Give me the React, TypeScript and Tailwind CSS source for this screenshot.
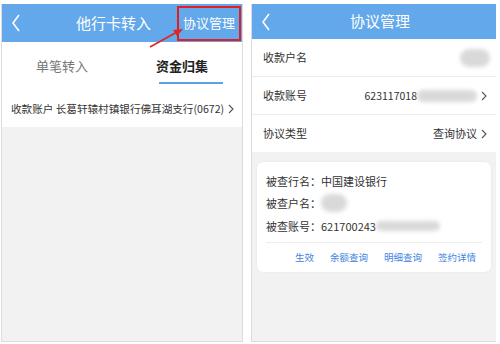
import React from "react"

const font = { fontFamily: '"Noto Sans CJK SC", "Noto Sans", sans-serif' }

function Back() {
  return (
    <svg width="10" height="18" viewBox="0 0 10 18" className="shrink-0">
      <polyline points="8,1 2,9 8,17" fill="none" stroke="white" strokeWidth="1.6" />
    </svg>
  )
}

function Chevron() {
  return (
    <svg width="6" height="10" viewBox="0 0 6 10" className="shrink-0">
      <polyline points="1,1 5,5 1,9" fill="none" stroke="#555" strokeWidth="1.1" />
    </svg>
  )
}

function Blur({ className }: { className: string }) {
  return <span className={"inline-block rounded-full bg-[#d9d9d9] blur-[2px] " + className} />
}

function LeftPanel() {
  return (
    <div className="relative flex w-[242px] flex-col border-x border-b border-[#dcdcdc] bg-[#f2f2f2]">
      <div className="flex h-[38px] items-center bg-[#62a8ea] pl-[9px] pr-[1px] text-white">
        <Back />
        <div className="flex-1 pl-[55px] text-[15px]">他行卡转入</div>
        <div className="flex h-[35px] items-center border-2 border-[#e02020] px-[4px] text-[13px]">协议管理</div>
      </div>
      <svg className="absolute left-[145px] top-[22px]" width="40" height="24" viewBox="0 0 40 24">
        <line x1="3" y1="21" x2="30" y2="6" stroke="#e02525" strokeWidth="1.6" />
        <polygon points="36,3 26,4 30,10" fill="#e02525" />
      </svg>
      <div className="flex h-[48px] bg-white text-[13px]">
        <div className="flex w-1/2 items-center justify-center text-[#777]">单笔转入</div>
        <div className="relative flex w-1/2 items-center justify-center font-bold text-[#222]">
          资金归集
          <span className="absolute bottom-[6px] left-[37px] h-[2px] w-[64px] bg-[#5aa2e6]" />
        </div>
      </div>
      <div className="flex h-[37px] items-center justify-between bg-white pl-[9px] pr-[8px] text-[10.6px] text-[#333]">
        <span>收款账户 长葛轩辕村镇银行佛耳湖支行(0672)</span>
        <Chevron />
      </div>
    </div>
  )
}

function RightPanel() {
  return (
    <div className="flex w-[245px] flex-col border-l border-b border-[#dcdcdc] bg-[#f2f2f2] text-[#333]">
      <div className="flex h-[35px] items-center bg-[#62a8ea] pl-[9px] text-white">
        <Back />
        <div className="flex-1 pl-[79px] text-[15px]">协议管理</div>
      </div>
      <div className="bg-white text-[11px]">
        <div className="flex h-[38px] items-center justify-between border-b border-[#ececec] pl-[11px] pr-[6px]">
          <span>收款户名</span>
          <Blur className="h-[18px] w-[30px]" />
        </div>
        <div className="flex h-[38px] items-center border-b border-[#ececec] pl-[11px] pr-[9px]">
          <span className="flex-1">收款账号</span>
          <span className="text-[10.5px]" style={font}>623117018</span>
          <Blur className="mr-[4px] h-[12px] w-[60px]" />
          <Chevron />
        </div>
        <div className="flex h-[37px] items-center pl-[11px] pr-[9px]">
          <span className="flex-1">协议类型</span>
          <span className="mr-[4px]">查询协议</span>
          <Chevron />
        </div>
      </div>
      <div className="px-[5px] pt-[10px]">
        <div className="rounded-[6px] bg-white px-[9px] pt-[8px] text-[11px] shadow-[0_0_2px_rgba(0,0,0,0.08)]">
          <div className="flex h-[22px] items-center">被查行名：中国建设银行</div>
          <div className="flex h-[22px] items-center">
            被查户名：<Blur className="h-[18px] w-[26px]" />
          </div>
          <div className="flex h-[24px] items-center">
            被查账号：621700243<Blur className="h-[10px] w-[64px]" />
          </div>
          <div className="mt-[4px] flex h-[30px] items-center justify-end gap-[16px] border-t border-[#eeeeee] pr-[6px] text-[9.5px] text-[#3f83e0]">
            <span>生效</span>
            <span>余额查询</span>
            <span>明细查询</span>
            <span>签约详情</span>
          </div>
        </div>
      </div>
    </div>
  )
}

export default function App() {
  return (
    <div className="flex h-[344px] w-[500px] gap-[8px] bg-white pb-[2px] pl-[1px] pt-[4px]" style={font}>
      <LeftPanel />
      <RightPanel />
    </div>
  )
}
